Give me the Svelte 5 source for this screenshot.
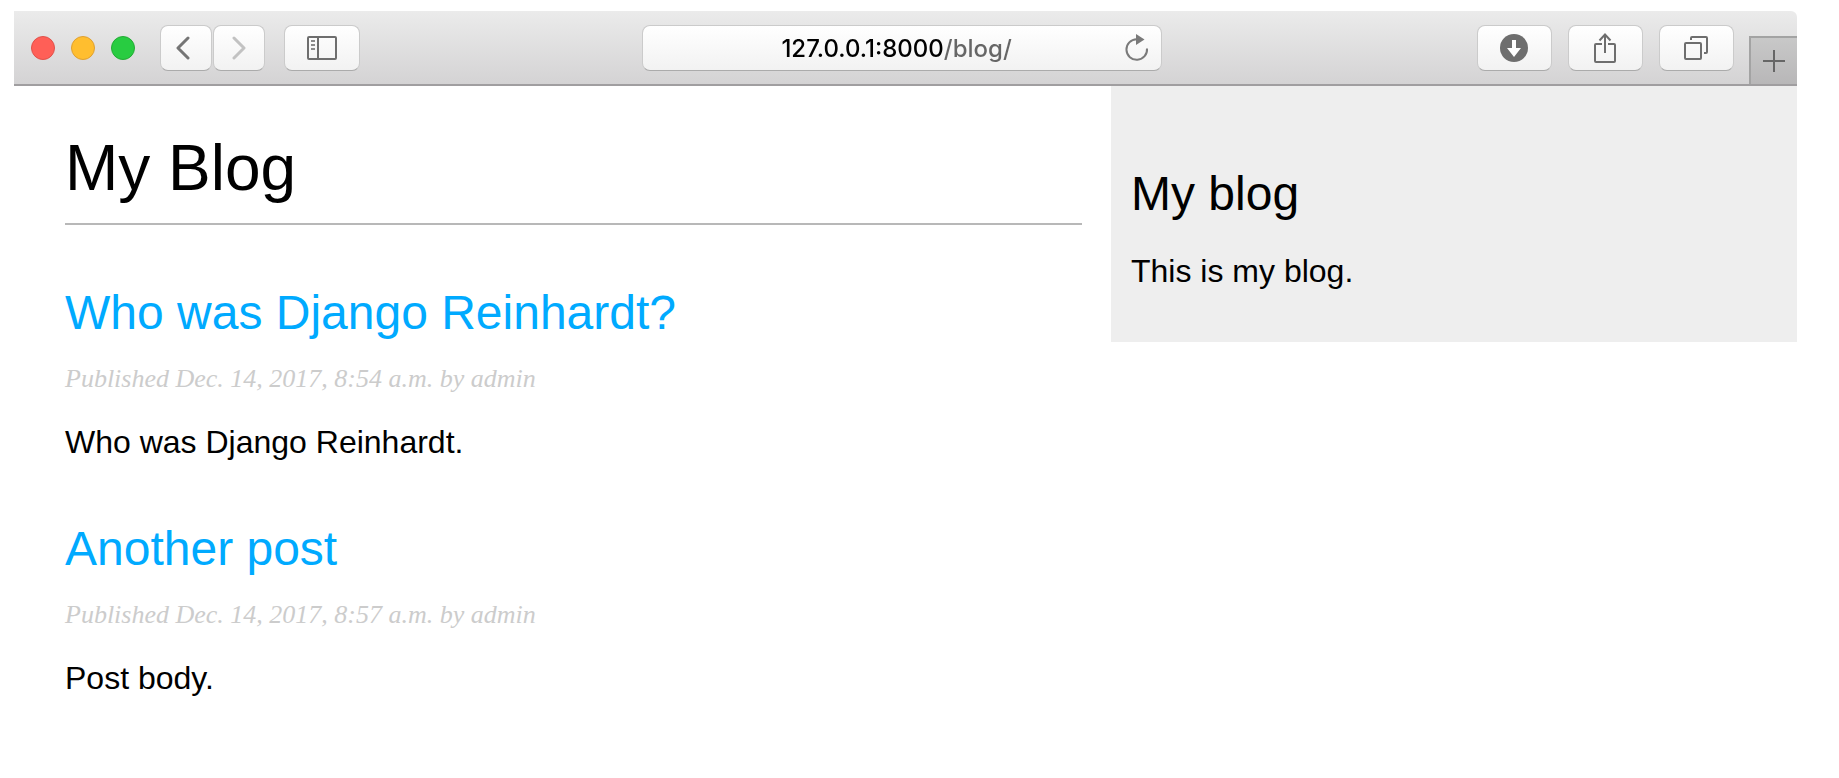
<script>
  const posts = [
    {
      title: 'Who was Django Reinhardt?',
      meta: 'Published Dec. 14, 2017, 8:54 a.m. by admin',
      body: 'Who was Django Reinhardt.'
    },
    {
      title: 'Another post',
      meta: 'Published Dec. 14, 2017, 8:57 a.m. by admin',
      body: 'Post body.'
    }
  ];
  let url = $state('127.0.0.1:8000/blog/');
</script>

<div class="window">
  <header class="chrome">
    <div class="toolbar">
      <div class="group left">
        <div class="lights">
          <button class="light red" aria-label="Close"></button>
          <button class="light yellow" aria-label="Minimize"></button>
          <button class="light green" aria-label="Zoom"></button>
        </div>
        <div class="nav">
          <button class="tool narrow" aria-label="Back">
            <svg class="back" width="14" height="24" viewBox="0 0 14 24" fill="none" stroke="#757575" stroke-width="3" stroke-linecap="round" stroke-linejoin="round"><path d="M12 2 2 12l10 10" /></svg>
          </button>
          <button class="tool narrow" aria-label="Forward">
            <svg width="14" height="24" viewBox="0 0 14 24" fill="none" stroke="#c2c2c2" stroke-width="3" stroke-linecap="round" stroke-linejoin="round"><path d="m2 2 10 10L2 22" /></svg>
          </button>
        </div>
        <button class="tool" aria-label="Show sidebar">
          <svg width="30" height="24" viewBox="0 0 30 24" fill="none" stroke="#6e6e6e" stroke-width="2"><rect x="1" y="1" width="28" height="22" rx="1" /><path d="M11 1v22" /><path stroke="#8c8c8c" d="M4 5h4M4 9h4M4 13h4" /></svg>
        </button>
      </div>

      <div class="address">
        <input type="text" aria-label="Address" spellcheck="false" bind:value={url} />
        <button class="reload" aria-label="Reload">
          <svg width="24" height="28" viewBox="0 0 24 28" fill="none"><path d="M22 14.500A10.300 10.300 0 1 1 11.700 5.200" stroke="#7a7a7a" stroke-width="2" /><path d="M11 0v11l8.500-5.500z" fill="#7a7a7a" /></svg>
        </button>
      </div>

      <div class="group right">
        <button class="tool" aria-label="Downloads">
          <svg width="28" height="28" viewBox="0 0 28 28"><circle cx="14" cy="14" r="14" fill="#6e6e6e" /><path d="M12 6h4v8h5l-7 9-7-9h5z" fill="#fff" /></svg>
        </button>
        <button class="tool" aria-label="Share">
          <svg width="22" height="30" viewBox="0 0 22 30" fill="none" stroke="#6e6e6e" stroke-width="2"><path d="M8 11H2q-1 0-1 1v16q0 1 1 1h18q1 0 1-1V12q0-1-1-1h-6M11 20V2M5.500 7.500 11 1.500l5.500 6" /></svg>
        </button>
        <button class="tool" aria-label="Show all tabs">
          <svg width="24" height="24" viewBox="0 0 24 24" fill="none" stroke="#6e6e6e" stroke-width="2"><rect x="1" y="7" width="16" height="16" rx="1" /><path d="M7 4V2q0-1 1-1h14q1 0 1 1v14q0 1-1 1h-2" /></svg>
        </button>
      </div>
    </div>
    <button class="new-tab" aria-label="New tab">
      <svg width="22" height="22" viewBox="0 0 22 22" stroke="#666" stroke-width="2"><path d="M11 0v22M0 11h22" /></svg>
    </button>
  </header>

  <div class="page">
    <main>
      <h1>My Blog</h1>
      {#each posts as post}
        <article>
          <h2><a href="#post">{post.title}</a></h2>
          <p class="meta">{post.meta}</p>
          <p>{post.body}</p>
        </article>
      {/each}
    </main>
    <aside>
      <h2>My blog</h2>
      <p>This is my blog.</p>
    </aside>
  </div>
</div>

<style>
  :global(body) {
    background: #fff;
  }
  .window {
    padding: 11px 42px 0 14px;
    font-family: "Liberation Sans", Helvetica, Arial, sans-serif;
    color: #000;
  }
  button {
    padding: 0;
    border: 0;
    background: none;
  }
  svg {
    display: block;
  }
  .chrome {
    display: flex;
    align-items: flex-end;
    border-bottom: 2px solid #a09ea0;
    border-top-right-radius: 6px;
    background: linear-gradient(#ebebeb, #d4d3d4);
  }
  .toolbar {
    flex: 1;
    min-width: 0;
    display: grid;
    grid-template-columns: 16fr minmax(0, 520px) 15fr;
    align-items: center;
    padding: 14px 15px 13px 17px;
  }
  .group {
    display: flex;
    align-items: center;
  }
  .left {
    gap: 19px;
  }
  .right {
    justify-content: flex-end;
    gap: 16px;
  }
  .lights {
    display: flex;
    gap: 16px;
    margin-right: 6px;
  }
  .light {
    width: 24px;
    height: 24px;
    border: 1px solid;
    border-radius: 50%;
  }
  .red {
    background: #ff5f57;
    border-color: #e0514a;
  }
  .yellow {
    background: #ffbe2f;
    border-color: #dfa032;
  }
  .green {
    background: #28cc41;
    border-color: #24ab35;
  }
  .nav {
    display: flex;
    gap: 1px;
  }
  .tool,
  .address {
    border: 1px solid #cbcbcb;
    border-bottom-color: #ababab;
    border-radius: 8px;
    background: linear-gradient(#fff, #f2f2f2);
    box-sizing: border-box;
    height: 46px;
  }
  .tool {
    display: flex;
    align-items: center;
    justify-content: center;
    width: 76px;
  }
  .tool.narrow {
    width: 52px;
  }
  .back {
    margin-right: 6px;
  }
  .right .tool {
    width: 75px;
  }
  .address {
    display: flex;
    align-items: center;
    padding: 0 12px 0 26px;
  }
  .address input {
    flex: 1;
    min-width: 0;
    padding: 2px 0 0;
    border: 0;
    outline: 0;
    font: 500 24px/32px Inter, sans-serif;
    text-align: center;
    color: transparent;
    caret-color: #000;
    background: linear-gradient(90deg, #000 calc(50% + 47px), #666 calc(50% + 47px));
    background-clip: text;
  }
  .new-tab {
    display: flex;
    align-items: center;
    justify-content: center;
    box-sizing: border-box;
    width: 48px;
    height: 48px;
    border-top: 2px solid #a3a3a3;
    border-left: 2px solid #a3a3a3;
    background: linear-gradient(#c8c8c8, #b8b7b8);
  }
  .page {
    display: grid;
    grid-template-columns: 1097fr 686fr;
    align-items: start;
  }
  main {
    padding: 46px 29px 45px 51px;
  }
  aside {
    padding: 80px 20px 53px;
    background: #eee;
  }
  h1,
  h2,
  p {
    margin: 0;
    font-weight: 400;
  }
  h1 {
    padding-bottom: 19px;
    border-bottom: 2px solid #b8b8b8;
    font-size: 64px;
    line-height: 72px;
  }
  h2 {
    font-size: 48px;
    line-height: 56px;
  }
  p {
    font-size: 32px;
    line-height: 36px;
  }
  aside p {
    margin-top: 31px;
  }
  article {
    margin-top: 60px;
  }
  article p:last-child {
    margin-bottom: 61px;
  }
  article + article {
    margin-top: 0;
  }
  a {
    color: #0af;
    text-decoration: none;
  }
  .meta {
    margin: 22px 0 29px;
    font: italic 26px/32px Georgia, "Liberation Serif", serif;
    color: #ccc;
  }
</style>
